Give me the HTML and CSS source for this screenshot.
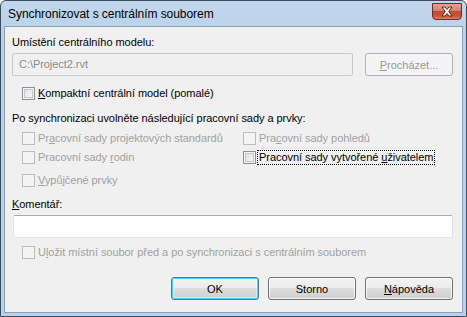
FILE: index.html
```html
<!DOCTYPE html>
<html lang="cs">
<head>
    <meta charset="UTF-8">
    <title>Synchronizovat s centrálním souborem</title>
    <link rel="stylesheet" href="styles.css">
</head>
<body>
    <div class="window">
        <div class="titlebar">
            <span class="title">Synchronizovat s centrálním souborem</span>
            <button class="close" title="Zavřít">
                <svg width="14" height="11" viewBox="0 0 14 11">
                    <path d="M2 1 L5 1 L7 3.5 L9 1 L12 1 L8.7 5.5 L12 10 L9 10 L7 7.5 L5 10 L2 10 L5.3 5.5 Z" fill="#fff" stroke="#5a2a22" stroke-width="1" stroke-linejoin="round"/>
                </svg>
            </button>
        </div>
        <div class="client">
            <div class="label first">Umístění centrálního modelu:</div>
            <div class="path-row">
                <div class="field disabled">C:\Project2.rvt</div>
                <button class="btn" disabled><u>P</u>rocházet...</button>
            </div>

            <label class="check compact">
                <span class="box"></span>
                <span><u>K</u>ompaktní centrální model (pomalé)</span>
            </label>

            <div class="label section">Po synchronizaci uvolněte následující pracovní sady a prvky:</div>
            <div class="sets">
                <label class="check off">
                    <span class="box"></span>
                    <span>Pr<u>a</u>covní sady projektových standardů</span>
                </label>
                <label class="check off">
                    <span class="box"></span>
                    <span>Pra<u>c</u>ovní sady pohledů</span>
                </label>
                <label class="check off">
                    <span class="box"></span>
                    <span>Pracovní sady <u>r</u>odin</span>
                </label>
                <label class="check">
                    <span class="box"></span>
                    <span class="focus">Pracovní sady vytvořené <u>u</u>živatelem</span>
                </label>
                <label class="check off last">
                    <span class="box"></span>
                    <span><u>V</u>ypůjčené prvky</span>
                </label>
            </div>

            <div class="label comment-label"><u>K</u>omentář:</div>
            <div class="field comment"></div>

            <label class="check off save">
                <span class="box"></span>
                <span>U<u>l</u>ožit místní soubor před a po synchronizaci s centrálním souborem</span>
            </label>

            <div class="actions">
                <button class="btn default">OK</button>
                <button class="btn">Storno</button>
                <button class="btn"><u>N</u>ápověda</button>
            </div>
        </div>
    </div>
</body>
</html>
```

FILE: styles.css
```css
html, body {
    margin: 0;
    padding: 0;
    width: 467px;
    height: 317px;
    overflow: hidden;
    background: #fff;
}
body {
    font-family: 'Liberation Sans', Arial, sans-serif;
    font-size: 11px;
    letter-spacing: -0.05px;
    color: #000;
}
.window {
    box-sizing: border-box;
    width: 467px;
    height: 317px;
    border: 1px solid #3b4a5c;
    border-radius: 6px 6px 0 0;
    background: linear-gradient(#c2d6ec, #b9d1ea 40px, #b9d1ea);
    padding: 0 3px 3px 3px;
    display: flex;
    flex-direction: column;
}
.titlebar {
    height: 25px;
    display: flex;
    align-items: center;
    justify-content: space-between;
    flex-shrink: 0;
}
.title {
    font-size: 12px;
    padding-left: 4px;
    color: #000;
}
.close {
    width: 30px;
    height: 17px;
    margin-top: -5px;
    margin-right: 1px;
    border: 1px solid #6b2a22;
    border-radius: 0 0 4px 4px;
    background: linear-gradient(#e8a293, #d47f6c 45%, #c24a33 50%, #c6543a 80%, #d88567);
    display: flex;
    align-items: center;
    justify-content: center;
    padding: 0;
}
.client {
    flex: 1;
    border: 1px solid #8ba0b8;
    background: #f0f0f0;
    padding: 0 9px 0 7px;
    display: flex;
    flex-direction: column;
}
.label {
    line-height: 13px;
    height: 13px;
}
.label.first {
    margin-top: 9px;
}
.path-row {
    display: flex;
    justify-content: space-between;
    margin-top: 4px;
}
.field {
    box-sizing: border-box;
    height: 23px;
    border: 1px solid #abadb3;
    border-color: #abadb3 #dbdfe6 #e3e9ef #e2e3ea;
    border-radius: 2px;
    background: #fff;
    line-height: 21px;
    padding-left: 6px;
}
.field.disabled {
    width: 341px;
    background: #f0f0f0;
    border-color: #c8c8c8;
    color: #8a8a8a;
}
.btn {
    box-sizing: border-box;
    width: 88px;
    height: 23px;
    padding: 0;
    font: inherit;
    color: #000;
    border: 1px solid #707070;
    border-radius: 3px;
    background: linear-gradient(#f2f2f2, #ebebeb 50%, #dddddd 50%, #cfcfcf);
    box-shadow: inset 0 0 0 1px rgba(255, 255, 255, 0.75);
}
.btn:disabled {
    color: #9a9a9a;
    border-color: #adb2b5;
    background: #f4f4f4;
    box-shadow: none;
}
.btn.default {
    border-color: #3c7fb1;
    box-shadow: inset 0 0 0 1px #48d0f4, inset 0 0 0 2px rgba(255, 255, 255, 0.4);
}
.check {
    display: flex;
    align-items: center;
    height: 13px;
    line-height: 13px;
    padding-left: 10px;
}
.check .box {
    box-sizing: border-box;
    width: 13px;
    height: 13px;
    border: 1px solid #8e8f8f;
    background: linear-gradient(135deg, #dcdcdc, #fbfbfb);
    box-shadow: inset 0 0 0 1px #f4f4f4, inset 0 0 0 2px #c4c7c9;
    margin-right: 3px;
    flex-shrink: 0;
}
.check.off {
    color: #a0a0a0;
}
.check.off .box {
    border-color: #bcbcbc;
    background: #f4f4f4;
    box-shadow: none;
}
.check.compact {
    margin-top: 11px;
}
.label.section {
    margin-top: 12px;
}
.sets {
    display: grid;
    grid-template-columns: 221px auto;
    row-gap: 6px;
    margin-top: 7px;
}
.sets .check.last {
    margin-top: 4px;
}
.focus {
    outline: 1px dotted #000;
    outline-offset: 0;
    padding: 0 1px;
    margin-left: -1px;
}
.label.comment-label {
    margin-top: 11px;
}
.field.comment {
    margin-top: 4px;
    margin-left: 1px;
}
.check.save {
    margin-top: 8px;
}
.actions {
    display: flex;
    justify-content: flex-end;
    gap: 9px;
    margin-top: 18px;
}
u {
    text-decoration-thickness: 1px;
    text-underline-offset: 1px;
}
```
